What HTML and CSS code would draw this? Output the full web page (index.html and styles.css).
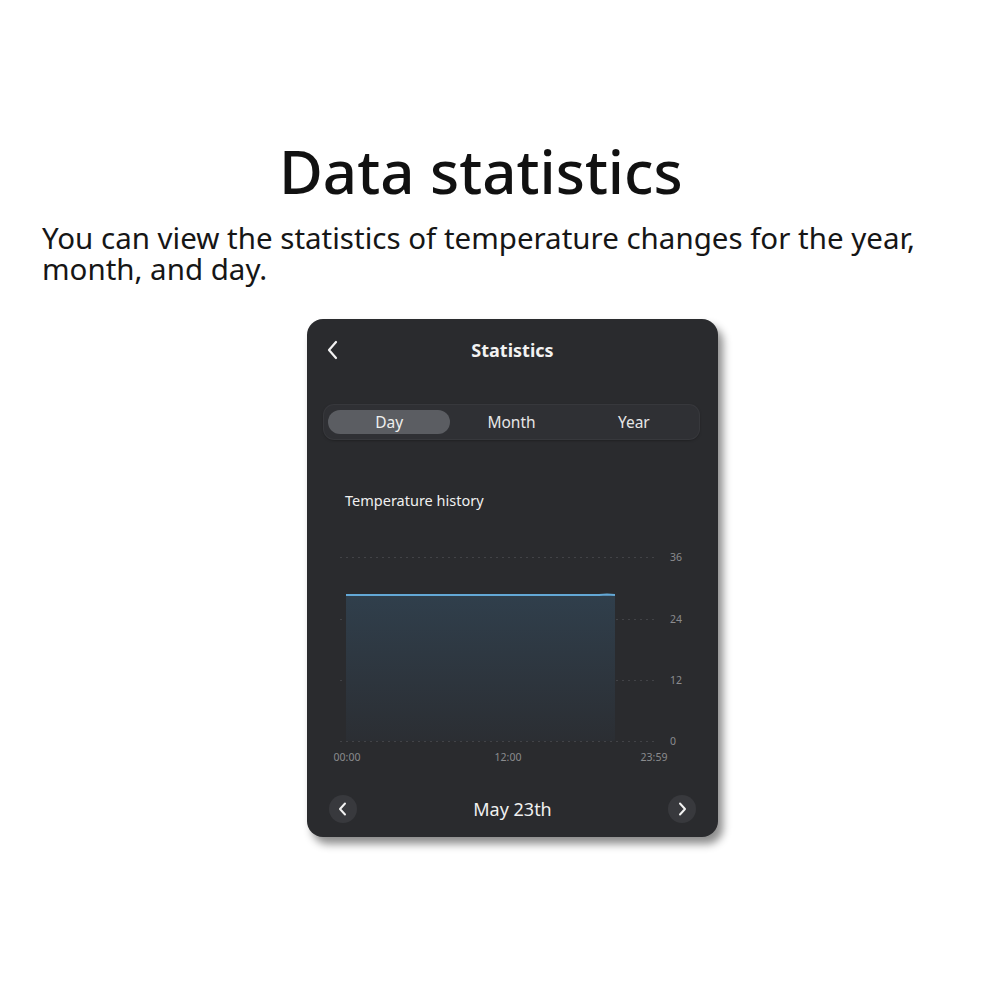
FILE: index.html
```html
<!DOCTYPE html>
<html lang="en">
<head>
<meta charset="utf-8">
<title>Data statistics</title>
<link rel="stylesheet" href="styles.css">
</head>
<body>
<main class="page">
  <h1 class="headline">Data statistics</h1>
  <p class="lead">You can view the statistics of temperature changes for the year, month, and day.</p>

  <section class="phone">
    <header class="phone-head">
      <button class="back" aria-label="Back">
        <svg width="14" height="22" viewBox="0 0 14 22"><path d="M10 3 L3 11 L10 19" fill="none" stroke="#f2f2f2" stroke-width="2.2" stroke-linecap="round" stroke-linejoin="round"/></svg>
      </button>
      <div class="phone-title">Statistics</div>
    </header>

    <div class="tabs">
      <div class="tab active">Day</div>
      <div class="tab">Month</div>
      <div class="tab">Year</div>
    </div>

    <div class="chart-title">Temperature history</div>

    <svg class="chart" width="411" height="230" viewBox="0 0 411 230">
      <defs>
        <linearGradient id="fill" x1="0" y1="0" x2="0" y2="1">
          <stop offset="0" stop-color="#303f4c"/>
          <stop offset="1" stop-color="#2b2e33"/>
        </linearGradient>
      </defs>
      <g stroke="#424347" stroke-width="1" stroke-dasharray="2 4">
        <line x1="33" y1="17.5" x2="350" y2="17.5"/>
        <line x1="33" y1="79.5" x2="350" y2="79.5"/>
        <line x1="33" y1="140.5" x2="350" y2="140.5"/>
        <line x1="33" y1="201.5" x2="350" y2="201.5"/>
      </g>
      <rect x="39" y="54" width="269" height="147" fill="url(#fill)"/>
      <path d="M39 55 L292 55 L300 54.5 L308 55" fill="none" stroke="#63a8d6" stroke-width="2"/>
      <g class="axis-y">
        <text x="363" y="21">36</text>
        <text x="363" y="83">24</text>
        <text x="363" y="144">12</text>
        <text x="363" y="205">0</text>
      </g>
      <g class="axis-x">
        <text x="40" y="221" text-anchor="middle">00:00</text>
        <text x="201" y="221" text-anchor="middle">12:00</text>
        <text x="347" y="221" text-anchor="middle">23:59</text>
      </g>
    </svg>

    <footer class="pager">
      <button class="round" aria-label="Previous day">
        <svg width="12" height="16" viewBox="0 0 12 16"><path d="M8 2.5 L3 8 L8 13.5" fill="none" stroke="#f2f2f2" stroke-width="2" stroke-linecap="round" stroke-linejoin="round"/></svg>
      </button>
      <div class="date">May 23th</div>
      <button class="round" aria-label="Next day">
        <svg width="12" height="16" viewBox="0 0 12 16"><path d="M4 2.5 L9 8 L4 13.5" fill="none" stroke="#f2f2f2" stroke-width="2" stroke-linecap="round" stroke-linejoin="round"/></svg>
      </button>
    </footer>
  </section>
</main>
</body>
</html>
```

FILE: styles.css
```css
html, body {
  margin: 0;
  padding: 0;
  background: #ffffff;
}

.page {
  width: 1001px;
  height: 1001px;
  display: flex;
  flex-direction: column;
  font-family: "Noto Sans", "Open Sans", sans-serif;
  color: #111111;
}

.headline {
  margin: 136px 0 0 279px;
  font-size: 60px;
  line-height: 70px;
  font-weight: 500;
  letter-spacing: 0;
}

.lead {
  margin: 16px 0 0 42px;
  width: 920px;
  font-size: 29.5px;
  line-height: 31px;
  color: #161616;
}

.phone {
  margin: 35px 0 0 307px;
  width: 411px;
  height: 518px;
  background: #2a2b2e;
  border-radius: 16px;
  box-shadow: 5px 7px 8px rgba(0, 0, 0, 0.45);
  display: flex;
  flex-direction: column;
  color: #f2f2f2;
  font-family: "Noto Sans", "Open Sans", sans-serif;
}

.phone-head {
  height: 62px;
  display: flex;
  align-items: center;
  position: relative;
}

.back {
  position: absolute;
  left: 15px;
  top: 20px;
  width: 22px;
  height: 22px;
  padding: 0;
  border: 0;
  background: none;
  display: flex;
  align-items: center;
  justify-content: center;
}

.phone-title {
  flex: 1;
  text-align: center;
  font-size: 18px;
  font-weight: 700;
}

.tabs {
  margin: 24px 19px 0 17px;
  height: 34px;
  box-sizing: border-box;
  padding: 5px 4px;
  border-radius: 10px;
  background: #2f3034;
  box-shadow: 0 0 0 1px #37383c, 0 1px 3px rgba(0, 0, 0, 0.5);
  display: grid;
  grid-template-columns: 1fr 1fr 1fr;
}

.tab {
  display: flex;
  align-items: center;
  justify-content: center;
  font-size: 15.5px;
  color: #e6e6e6;
  border-radius: 12px;
}

.tab.active {
  background: #5b5d62;
  color: #eeeeee;
}

.chart-title {
  margin: 51px 0 0 38px;
  height: 20px;
  line-height: 20px;
  font-size: 14.5px;
  color: #f0f0f0;
}

.chart {
  display: block;
  margin-top: 30px;
}

.axis-y text,
.axis-x text {
  font-family: "Noto Sans", sans-serif;
  font-size: 10.5px;
  fill: #8a8b8e;
}

.pager {
  margin: 25px 22px 0 22px;
  height: 28px;
  display: flex;
  align-items: center;
  justify-content: space-between;
}

.round {
  width: 28px;
  height: 28px;
  padding: 0;
  border: 0;
  border-radius: 50%;
  background: #38393d;
  display: flex;
  align-items: center;
  justify-content: center;
}

.date {
  font-size: 18px;
  color: #f0f0f0;
}
```
